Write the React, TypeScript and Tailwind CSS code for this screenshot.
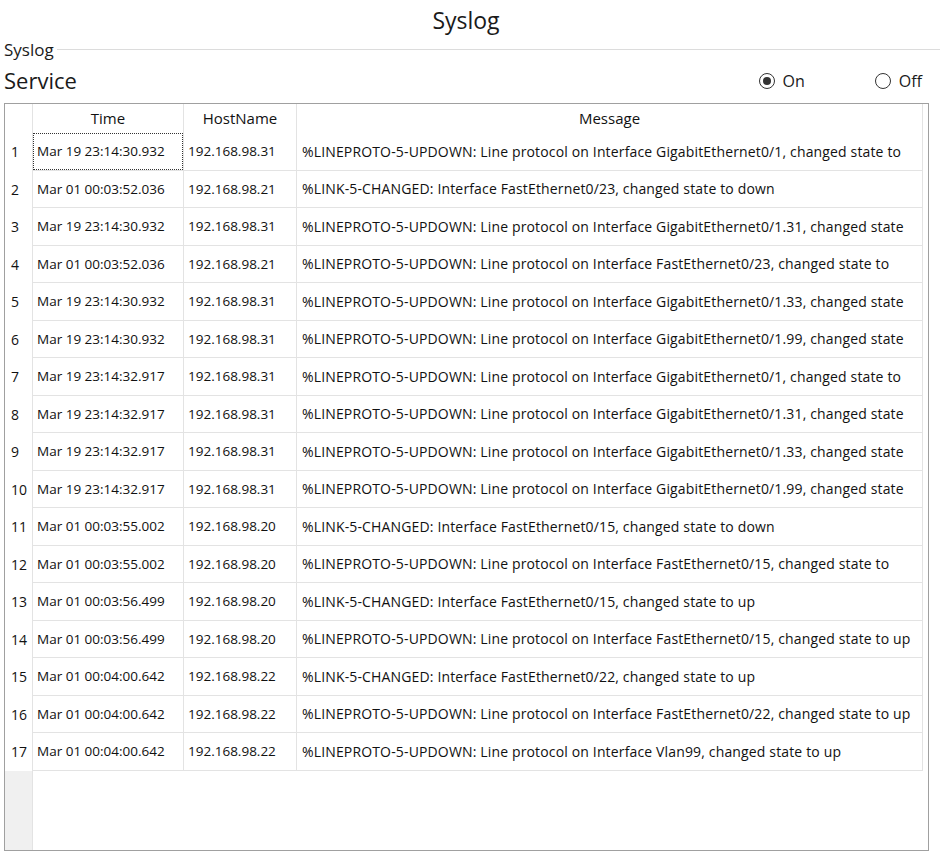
import React from 'react';

type Row = { time: string; host: string; msg: string };

const rows: Row[] = [
  { time: 'Mar 19 23:14:30.932', host: '192.168.98.31', msg: '%LINEPROTO-5-UPDOWN: Line protocol on Interface GigabitEthernet0/1, changed state to' },
  { time: 'Mar 01 00:03:52.036', host: '192.168.98.21', msg: '%LINK-5-CHANGED: Interface FastEthernet0/23, changed state to down' },
  { time: 'Mar 19 23:14:30.932', host: '192.168.98.31', msg: '%LINEPROTO-5-UPDOWN: Line protocol on Interface GigabitEthernet0/1.31, changed state' },
  { time: 'Mar 01 00:03:52.036', host: '192.168.98.21', msg: '%LINEPROTO-5-UPDOWN: Line protocol on Interface FastEthernet0/23, changed state to' },
  { time: 'Mar 19 23:14:30.932', host: '192.168.98.31', msg: '%LINEPROTO-5-UPDOWN: Line protocol on Interface GigabitEthernet0/1.33, changed state' },
  { time: 'Mar 19 23:14:30.932', host: '192.168.98.31', msg: '%LINEPROTO-5-UPDOWN: Line protocol on Interface GigabitEthernet0/1.99, changed state' },
  { time: 'Mar 19 23:14:32.917', host: '192.168.98.31', msg: '%LINEPROTO-5-UPDOWN: Line protocol on Interface GigabitEthernet0/1, changed state to' },
  { time: 'Mar 19 23:14:32.917', host: '192.168.98.31', msg: '%LINEPROTO-5-UPDOWN: Line protocol on Interface GigabitEthernet0/1.31, changed state' },
  { time: 'Mar 19 23:14:32.917', host: '192.168.98.31', msg: '%LINEPROTO-5-UPDOWN: Line protocol on Interface GigabitEthernet0/1.33, changed state' },
  { time: 'Mar 19 23:14:32.917', host: '192.168.98.31', msg: '%LINEPROTO-5-UPDOWN: Line protocol on Interface GigabitEthernet0/1.99, changed state' },
  { time: 'Mar 01 00:03:55.002', host: '192.168.98.20', msg: '%LINK-5-CHANGED: Interface FastEthernet0/15, changed state to down' },
  { time: 'Mar 01 00:03:55.002', host: '192.168.98.20', msg: '%LINEPROTO-5-UPDOWN: Line protocol on Interface FastEthernet0/15, changed state to' },
  { time: 'Mar 01 00:03:56.499', host: '192.168.98.20', msg: '%LINK-5-CHANGED: Interface FastEthernet0/15, changed state to up' },
  { time: 'Mar 01 00:03:56.499', host: '192.168.98.20', msg: '%LINEPROTO-5-UPDOWN: Line protocol on Interface FastEthernet0/15, changed state to up' },
  { time: 'Mar 01 00:04:00.642', host: '192.168.98.22', msg: '%LINK-5-CHANGED: Interface FastEthernet0/22, changed state to up' },
  { time: 'Mar 01 00:04:00.642', host: '192.168.98.22', msg: '%LINEPROTO-5-UPDOWN: Line protocol on Interface FastEthernet0/22, changed state to up' },
  { time: 'Mar 01 00:04:00.642', host: '192.168.98.22', msg: '%LINEPROTO-5-UPDOWN: Line protocol on Interface Vlan99, changed state to up' },
];

function Radio({ checked, label }: { checked: boolean; label: string }) {
  return (
    <div className="flex items-center gap-[8px]">
      <span className="flex h-[16px] w-[16px] items-center justify-center rounded-full border border-[#333333] bg-white">
        {checked && <span className="h-[8px] w-[8px] rounded-full bg-[#333333]" />}
      </span>
      <span className="text-[16px] text-[#1a1a1a]">{label}</span>
    </div>
  );
}

export default function App() {
  return (
    <div
      className="h-[856px] w-[940px] overflow-hidden bg-white text-black"
      style={{ fontFamily: '"Open Sans", "Noto Sans", sans-serif' }}
    >
      {/* Window title */}
      <div className="flex h-[40px] items-center justify-center pr-[8px] text-[23px] text-[#1a1a1a]">Syslog</div>

      {/* Group box header */}
      <div className="flex h-[18px] items-center pl-[4px]">
        <span className="text-[17px] leading-none text-[#1a1a1a]">Syslog</span>
        <div className="ml-[3px] h-px flex-1 bg-[#dcdcdc]" />
      </div>

      {/* Service row */}
      <div className="flex h-[45px] items-center justify-between pl-[4px] pr-[18px]">
        <span className="text-[22px] text-[#1a1a1a]">Service</span>
        <div className="flex items-center gap-[70px]">
          <Radio checked label="On" />
          <Radio checked={false} label="Off" />
        </div>
      </div>

      {/* Grid */}
      <div className="ml-[4px] flex h-[748px] w-[925px] flex-col border border-[#a0a0a0] text-[14px] text-[#111111]">
        <div className="flex h-[29px] shrink-0 text-[15px]">
          <div className="w-[28px] shrink-0 border-r border-[#e3e3e3]" />
          <div className="flex w-[151px] shrink-0 items-center justify-center border-r border-[#e3e3e3]">Time</div>
          <div className="flex w-[113px] shrink-0 items-center justify-center border-r border-[#e3e3e3]">HostName</div>
          <div className="flex w-[626px] shrink-0 items-center justify-center border-r border-[#e3e3e3]">Message</div>
          <div className="flex-1" />
        </div>
        {rows.map((r, i) => (
          <div key={i} className="flex h-[37.5px] shrink-0">
            <div className="flex w-[28px] shrink-0 items-center border-r border-[#e3e3e3] pl-[6px]">{i + 1}</div>
            <div className="flex w-[151px] shrink-0 border-b border-r border-[#e3e3e3]">
              <div
                className={
                  'flex flex-1 items-center overflow-hidden whitespace-nowrap pl-[3px] text-[13.5px] ' +
                  (i === 0 ? 'border border-dotted border-[#333333]' : 'border border-transparent')
                }
              >
                {r.time}
              </div>
            </div>
            <div className="flex w-[113px] shrink-0 items-center overflow-hidden whitespace-nowrap border-b border-r border-[#e3e3e3] pl-[4px] text-[13.5px]">
              {r.host}
            </div>
            <div className="flex w-[626px] shrink-0 items-center overflow-hidden whitespace-nowrap border-b border-r border-[#e3e3e3] pl-[5px] tracking-[0.15px]">
              {r.msg}
            </div>
            <div className="flex-1" />
          </div>
        ))}
        <div className="flex flex-1">
          <div className="w-[28px] shrink-0 border-r border-[#e3e3e3] bg-[#f0f0f0]" />
          <div className="flex-1" />
        </div>
      </div>
    </div>
  );
}
